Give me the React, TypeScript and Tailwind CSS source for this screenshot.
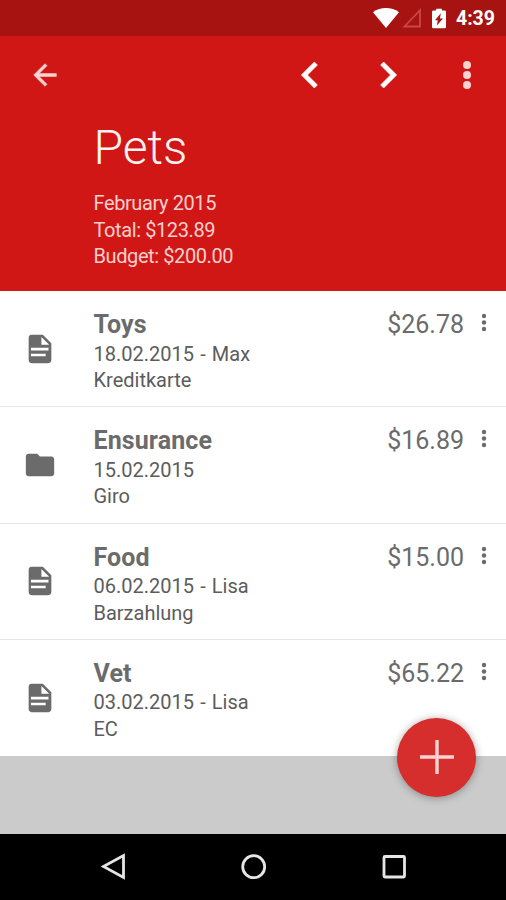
type Entry = {
    title: string;
    date: string;
    account: string;
    amount: string;
    icon: 'file' | 'folder';
};

const entries: Entry[] = [
    { title: 'Toys', date: '18.02.2015 - Max', account: 'Kreditkarte', amount: '$26.78', icon: 'file' },
    { title: 'Ensurance', date: '15.02.2015', account: 'Giro', amount: '$16.89', icon: 'folder' },
    { title: 'Food', date: '06.02.2015 - Lisa', account: 'Barzahlung', amount: '$15.00', icon: 'file' },
    { title: 'Vet', date: '03.02.2015 - Lisa', account: 'EC', amount: '$65.22', icon: 'file' },
];

function StatusBar() {
    return (
        <div className="flex h-9 items-center justify-end bg-[#a61310] pr-[11px] text-white">
            <svg className="h-[20px] w-[26px]" viewBox="0 0 26 20" fill="currentColor">
                <path d="M0 4.2C7.5-1.4 18.5-1.4 26 4.2L13 20z" />
            </svg>
            <svg className="ml-[3px] h-[20px] w-[20px] text-[#cb4744]" viewBox="0 0 20 20" fill="none" stroke="currentColor" strokeWidth="1.8">
                <path d="M2.5 18.5H18V2.2z" />
            </svg>
            <svg className="ml-[10px] h-[21px] w-[14px]" viewBox="0 0 15 21" fill="currentColor">
                <path fillRule="evenodd" d="M4.5 0h6v2H13.5Q15 2 15 3.5V19.5Q15 21 13.5 21H1.5Q0 21 0 19.5V3.5Q0 2 1.5 2H4.5zM9.5 5L3.2 12.5H6.2L5.2 18L11.8 10.5H8.5z" />
            </svg>
            <span className="mt-[2px] ml-[10px] text-[19.5px] leading-none font-bold">4:39</span>
        </div>
    );
}

function Header() {
    return (
        <header className="h-[255px] bg-[#d01716] text-white">
            <div className="flex h-[78px] items-center">
                <svg className="ml-[28px] size-[34px] text-[#fbd3d1]" viewBox="0 0 24 24" fill="currentColor" stroke="currentColor" strokeWidth="0.4">
                    <path d="M20 11H7.83l5.59-5.59L12 4l-8 8 8 8 1.41-1.41L7.83 13H20v-2z" />
                </svg>
                <svg className="ml-[222px] size-[52px]" viewBox="0 0 24 24" fill="currentColor" stroke="currentColor" strokeWidth="0.3">
                    <path d="M15.41 7.41L14 6l-6 6 6 6 1.41-1.41L10.83 12z" />
                </svg>
                <svg className="ml-[26px] size-[52px]" viewBox="0 0 24 24" fill="currentColor" stroke="currentColor" strokeWidth="0.3">
                    <path d="M10 6L8.59 7.41 13.17 12l-4.58 4.59L10 18l6-6z" />
                </svg>
                <svg className="ml-[48px] h-[30px] w-[10px] text-[#fbd3d1]" viewBox="0 0 10 30" fill="currentColor">
                    <circle cx="5" cy="5" r="4" />
                    <circle cx="5" cy="15" r="4" />
                    <circle cx="5" cy="25" r="4" />
                </svg>
            </div>
            <div className="pl-[93.5px]">
                <h1 className="pt-[4px] text-[48px] leading-[60px] font-light text-[#fff3f2]">Pets</h1>
                <div className="mt-[12px] text-[20px] leading-[26.5px] tracking-[-0.4px] text-[#fbcfcd]">
                    <p>February 2015</p>
                    <p>Total: $123.89</p>
                    <p>Budget: $200.00</p>
                </div>
            </div>
        </header>
    );
}

function EntryIcon({ icon }: { icon: Entry['icon'] }) {
    return (
        <svg className="size-[34px] text-[#6b6b6b]" viewBox="0 0 24 24" fill="currentColor">
            {icon === 'file' ? (
                <path fillRule="evenodd" d="M14 2H6c-1.1 0-2 .9-2 2v16c0 1.1.9 2 2 2h12c1.1 0 2-.9 2-2V8l-6-6zM5.6 11.2H18V13H5.6zM5.6 15.4H16V17.200H5.600zM13 9V3.500L18.500 9H13z" />
            ) : (
                <path d="M10 4H4c-1.1 0-1.99.9-1.99 2L2 18c0 1.1.9 2 2 2h16c1.1 0 2-.9 2-2V8c0-1.1-.9-2-2-2h-8l-2-2z" />
            )}
        </svg>
    );
}

function EntryRow({ entry }: { entry: Entry }) {
    return (
        <li className="flex h-[116.25px] border-b border-[#e6e6e6] last:border-b-0">
            <div className="flex w-[93.5px] items-center pl-[23px]">
                <EntryIcon icon={entry.icon} />
            </div>
            <div className="flex-1 pt-[18px]">
                <h2 className="text-[25px] leading-[31.5px] font-bold tracking-[0.1px] text-[#6b6b6b]">{entry.title}</h2>
                <div className="text-[20px] leading-[26.5px] [word-spacing:1.2px] text-[#5c5c5c]">
                    <p>{entry.date}</p>
                    <p>{entry.account}</p>
                </div>
            </div>
            <span className="pt-[18px] text-[25px] leading-[31.5px] text-[#6b6b6b]">{entry.amount}</span>
            <svg className="mt-[21px] mr-[17px] ml-[15px] h-[20px] w-[10px] text-[#6b6b6b]" viewBox="0 0 10 20" fill="currentColor">
                <circle cx="5" cy="4" r="2.2" />
                <circle cx="5" cy="10.5" r="2.2" />
                <circle cx="5" cy="17" r="2.2" />
            </svg>
        </li>
    );
}

function NavBar() {
    return (
        <nav className="flex h-[66px] items-center bg-black text-[#e6e6e6]">
            <svg className="ml-[100px] size-[28px]" viewBox="0 0 28 28" fill="none" stroke="currentColor" strokeWidth="2.8">
                <path d="M3.5 13.5L23.5 2.5V24.500z" />
            </svg>
            <svg className="ml-[112px] size-[28px]" viewBox="0 0 28 28" fill="none" stroke="currentColor" strokeWidth="2.8">
                <circle cx="13.7" cy="13.700" r="11" />
            </svg>
            <svg className="ml-[112px] size-[28px]" viewBox="0 0 28 28" fill="none" stroke="currentColor" strokeWidth="2.8">
                <rect x="4" y="3.500" width="20.500" height="20.500" rx="1" />
            </svg>
        </nav>
    );
}

export default function App() {
    return (
        <div className="relative flex h-[900px] w-[506px] flex-col overflow-hidden bg-[#cbcbcb] font-['Roboto',sans-serif]">
            <StatusBar />
            <Header />
            <ul className="bg-white">
                {entries.map((entry) => (
                    <EntryRow key={entry.title} entry={entry} />
                ))}
            </ul>
            <div className="flex-1" />
            <NavBar />
            <button className="absolute right-[30px] bottom-[103.5px] flex size-[79px] items-center justify-center rounded-full bg-[#d62d2d] text-[#fbd3d1] shadow-[0_1px_9px_rgba(0,0,0,0.35)]">
                <svg className="size-[34px]" viewBox="0 0 34 34" fill="none" stroke="currentColor" strokeWidth="3.4">
                    <path d="M17 0V34M0 17H34" />
                </svg>
            </button>
        </div>
    );
}
